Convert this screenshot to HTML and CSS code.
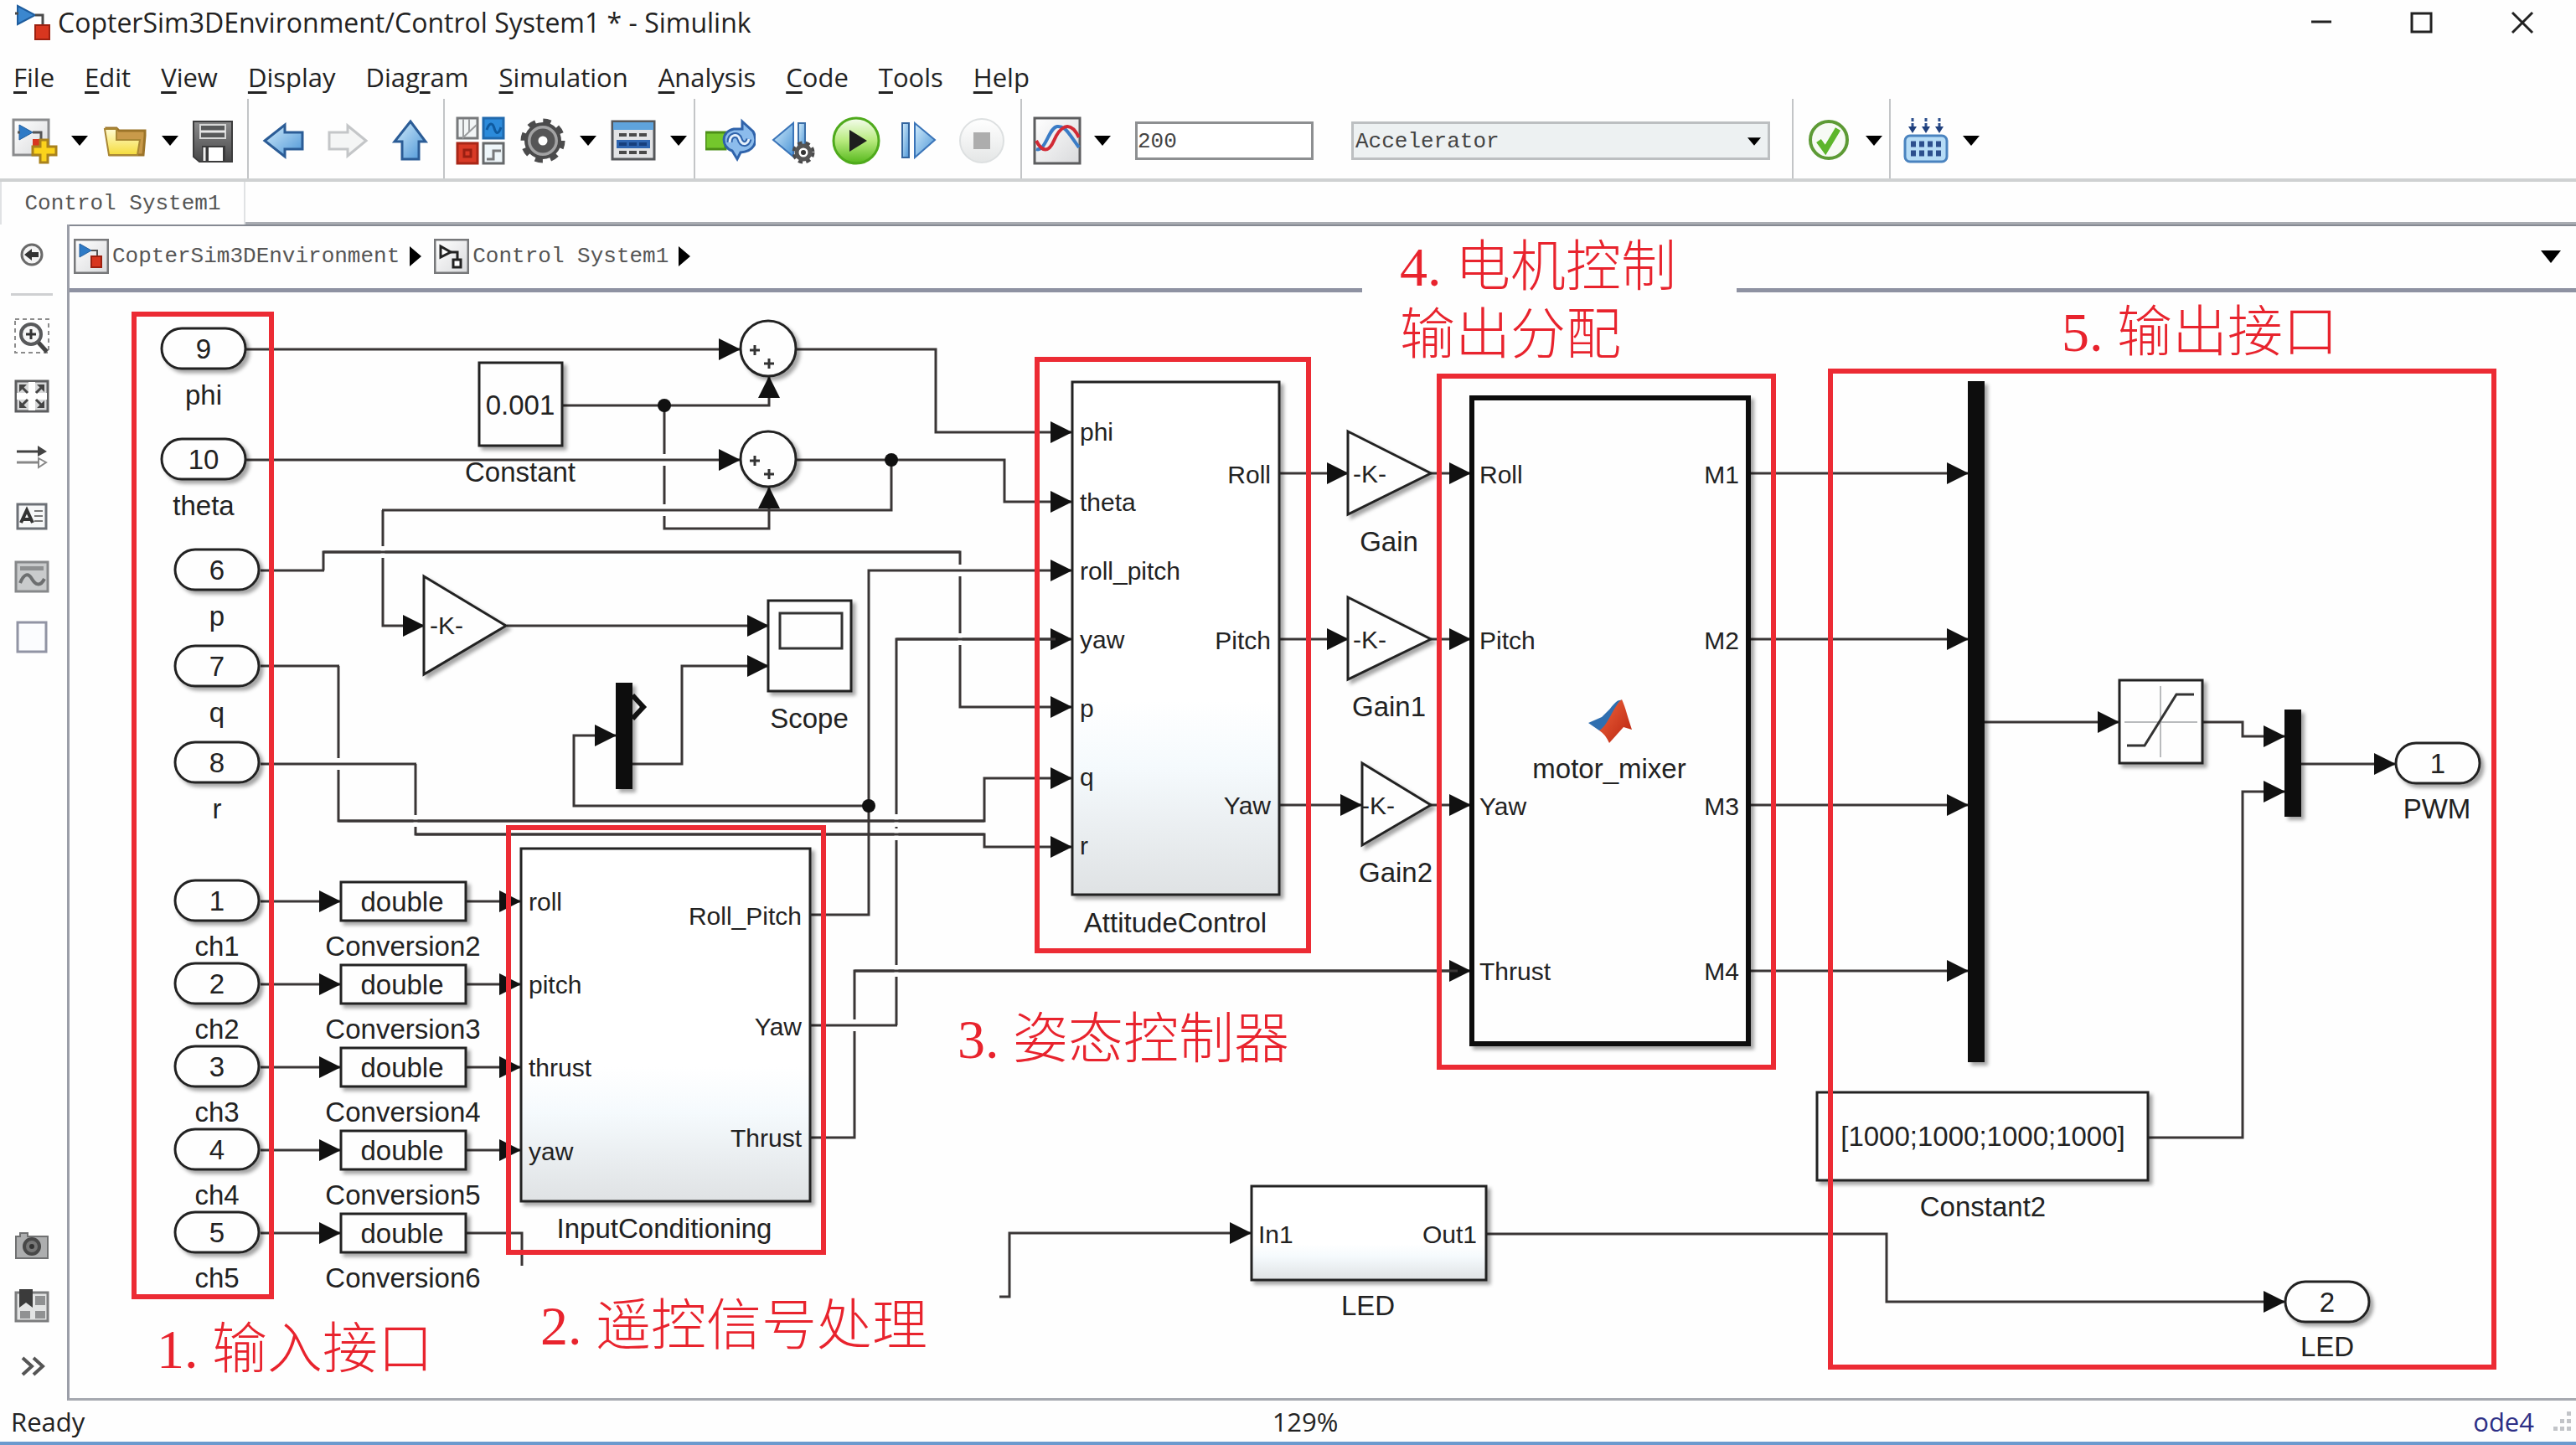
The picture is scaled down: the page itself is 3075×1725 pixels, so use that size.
FILE: index.html
```html
<!DOCTYPE html>
<html lang="zh-CN">
<head>
<meta charset="utf-8">
<title>CopterSim3DEnvironment/Control System1 * - Simulink</title>
<link rel="stylesheet" href="styles.css">
</head>
<body>
<svg class="defs" width="0" height="0" aria-hidden="true">
  <defs>
    <linearGradient id="gBlue" x1="0" y1="0" x2="1" y2="1"><stop offset="0" stop-color="#d3ecfb"/><stop offset="1" stop-color="#4a94d6"/></linearGradient>
    <linearGradient id="gPage" x1="0" y1="0" x2="1" y2="1"><stop offset="0" stop-color="#ffffff"/><stop offset="1" stop-color="#d9dadc"/></linearGradient>
    <linearGradient id="gGold" x1="0" y1="0" x2="0" y2="1"><stop offset="0" stop-color="#fffbd0"/><stop offset="1" stop-color="#f5dc3c"/></linearGradient>
    <linearGradient id="gGrey" x1="0" y1="0" x2="0" y2="1"><stop offset="0" stop-color="#8b8b8c"/><stop offset="1" stop-color="#474748"/></linearGradient>
    <linearGradient id="gGreen" x1="0" y1="0" x2="0" y2="1"><stop offset="0" stop-color="#f6fdf0"/><stop offset="0.5" stop-color="#b7ea7d"/><stop offset="1" stop-color="#56b81c"/></linearGradient>
    <linearGradient id="gStop" x1="0" y1="0" x2="0" y2="1"><stop offset="0" stop-color="#ffffff"/><stop offset="1" stop-color="#e4e6e6"/></linearGradient>
    <linearGradient id="gSub" x1="0" y1="0" x2="0" y2="1"><stop offset="0" stop-color="#ffffff"/><stop offset="0.62" stop-color="#ffffff"/><stop offset="0.75" stop-color="#f5fafd"/><stop offset="1" stop-color="#dfe2e4"/></linearGradient>
    <linearGradient id="gRed" x1="0" y1="0" x2="1" y2="1"><stop offset="0" stop-color="#f0643c"/><stop offset="1" stop-color="#b8230f"/></linearGradient>
    <symbol id="model" viewBox="0 0 42 42">
      <rect x="1" y="1" width="40" height="40" fill="url(#gPage)" stroke="#77787a" stroke-width="3"/>
      <path d="M7 6 L21 14 L7 22Z" fill="#2e7ac6" stroke="#2560a0"/>
      <path d="M21 14 H28 V21" fill="none" stroke="#555" stroke-width="2"/>
      <rect x="21" y="21" width="12" height="13" fill="#d8361f" stroke="#9c2010" stroke-width="2"/>
    </symbol>
  </defs>
</svg>

<header class="titlebar">
  <svg class="app-icon" width="44" height="44" viewBox="0 0 44 44" aria-hidden="true">
    <path d="M3 2 L24 13 L3 24Z" fill="#3b87cf" stroke="#1f5d9e" stroke-width="2"/>
    <path d="M0 11 H4 M24 13 H33 V24" fill="none" stroke="#4a4a4a" stroke-width="3"/>
    <rect x="24" y="25" width="17" height="17" fill="#d8361f" stroke="#9c2010" stroke-width="2"/>
  </svg>
  <h1>CopterSim3DEnvironment/Control System1 * - Simulink</h1>
  <div class="window-buttons">
    <button type="button" aria-label="Minimize"><svg width="30" height="30" viewBox="0 0 30 30"><path d="M3 14 H27" stroke="#222" stroke-width="3"/></svg></button>
    <button type="button" aria-label="Maximize"><svg width="30" height="30" viewBox="0 0 30 30"><rect x="3" y="4" width="23" height="22" fill="none" stroke="#222" stroke-width="3"/></svg></button>
    <button type="button" aria-label="Close"><svg width="30" height="30" viewBox="0 0 30 30"><path d="M3 3 L27 27 M27 3 L3 27" stroke="#222" stroke-width="3"/></svg></button>
  </div>
</header>

<nav class="menubar">
  <button type="button"><u>F</u>ile</button>
  <button type="button"><u>E</u>dit</button>
  <button type="button"><u>V</u>iew</button>
  <button type="button"><u>D</u>isplay</button>
  <button type="button">Diag<u>r</u>am</button>
  <button type="button"><u>S</u>imulation</button>
  <button type="button"><u>A</u>nalysis</button>
  <button type="button"><u>C</u>ode</button>
  <button type="button"><u>T</u>ools</button>
  <button type="button"><u>H</u>elp</button>
</nav>

<div class="toolbar">
  <div class="group">
    <button type="button" class="tool" aria-label="New model"><svg viewBox="0 0 60 60">
      <rect x="5" y="5" width="42" height="42" fill="url(#gPage)" stroke="#8a8b8d" stroke-width="3"/>
      <path d="M12 11 L28 20 L12 29Z" fill="#2e7ac6" stroke="#1f5d9e"/><path d="M10 20 H13 M28 20 H38 V28" fill="none" stroke="#555" stroke-width="3"/>
      <rect x="28" y="28" width="12" height="9" fill="#d8361f"/>
      <path d="M37 29 H46 V37 H56 V47 H46 V56 H37 V47 H28 V37 H37Z" fill="#fbd31c" stroke="#a9821c" stroke-width="3"/></svg></button>
    <button type="button" class="drop" aria-label="New options"><svg viewBox="0 0 20 12"><path d="M0 0 H20 L10 12Z"/></svg></button>
    <button type="button" class="tool" aria-label="Open"><svg viewBox="0 0 60 60">
      <path d="M8 15 H20 L23 18 H54 V24 L52 47 H12Z" fill="#c99a4a" stroke="#9c7429" stroke-width="3"/>
      <path d="M6 16 H20 V29 H48 L45 47 H11Z" fill="url(#gGold)" stroke="#a98734" stroke-width="2"/></svg></button>
    <button type="button" class="drop" aria-label="Open recent"><svg viewBox="0 0 20 12"><path d="M0 0 H20 L10 12Z"/></svg></button>
    <button type="button" class="tool" aria-label="Save"><svg viewBox="0 0 60 60">
      <path d="M4 7 H50 V55 H11 L4 49Z" fill="url(#gGrey)" stroke="#3c3c3d" stroke-width="2"/>
      <rect x="12" y="11" width="30" height="16" fill="#58595a" stroke="#d8d8d8" stroke-width="2"/><path d="M12 19 H42" stroke="#e8e8e8" stroke-width="3"/>
      <rect x="14" y="36" width="28" height="19" fill="#3a3a3b"/><rect x="22" y="38" width="17" height="16" fill="#fff"/><path d="M17 38 V54" stroke="#eee" stroke-width="3"/></svg></button>
  </div>
  <div class="group">
    <button type="button" class="tool" aria-label="Back"><svg viewBox="0 0 60 60"><path d="M7 30 L31 11 V20 H52 V40 H31 V49Z" fill="url(#gBlue)" stroke="#2b5c96" stroke-width="3"/></svg></button>
    <button type="button" class="tool" aria-label="Forward" disabled><svg viewBox="0 0 60 60"><path d="M53 30 L31 12 V20 H9 V40 H31 V48Z" fill="#f4f5f5" stroke="#c4c6c8" stroke-width="3"/></svg></button>
    <button type="button" class="tool" aria-label="Up to parent"><svg viewBox="0 0 60 60"><path d="M31 7 L49 31 H41 V52 H21 V31 H12Z" fill="url(#gBlue)" stroke="#2b5c96" stroke-width="3"/></svg></button>
  </div>
  <div class="group">
    <button type="button" class="tool" aria-label="Library browser"><svg viewBox="0 0 60 60">
      <rect x="3" y="3" width="24" height="24" fill="#f2f5f6" stroke="#77797b" stroke-width="3"/><path d="M10 4 V26 L26 11 M17 4 V20" fill="none" stroke="#9a9c9e" stroke-width="2"/>
      <rect x="34" y="3" width="24" height="24" fill="#2c8bdb" stroke="#2069ad" stroke-width="3"/><path d="M38 17 C41 8 45 8 47 15 S52 23 55 14" fill="none" stroke="#0f5a9f" stroke-width="3"/>
      <rect x="3" y="33" width="24" height="24" fill="#d93a26" stroke="#a82617" stroke-width="3"/><rect x="11" y="41" width="8" height="8" fill="none" stroke="#9a1f12" stroke-width="3"/>
      <rect x="34" y="33" width="24" height="24" fill="#eef6fa" stroke="#66696b" stroke-width="3"/><path d="M38 52 H46 V42 H55" fill="none" stroke="#77797b" stroke-width="3"/></svg></button>
    <button type="button" class="tool" aria-label="Model configuration"><svg viewBox="0 0 60 60">
      <circle cx="30" cy="30" r="23" fill="none" stroke="#4b4b4c" stroke-width="7" stroke-dasharray="9 9"/>
      <circle cx="30" cy="30" r="20" fill="#a3a3a4" stroke="#4b4b4c" stroke-width="4"/>
      <circle cx="30" cy="30" r="10" fill="#fff" stroke="#555556" stroke-width="9"/></svg></button>
    <button type="button" class="drop" aria-label="Configuration options"><svg viewBox="0 0 20 12"><path d="M0 0 H20 L10 12Z"/></svg></button>
    <button type="button" class="tool" aria-label="Model explorer"><svg viewBox="0 0 60 60">
      <rect x="5" y="7" width="50" height="45" fill="#e2e3e5" stroke="#55575a" stroke-width="3"/><rect x="6" y="8" width="48" height="9" fill="#5fa3dc"/>
      <rect x="10" y="29" width="40" height="10" fill="#2f65b0"/>
      <path d="M13 23 H47 M13 44 H47" stroke="#4a4a4a" stroke-width="4" stroke-dasharray="9 3"/><path d="M13 34 H47" stroke="#173f7d" stroke-width="4" stroke-dasharray="9 3"/></svg></button>
    <button type="button" class="drop" aria-label="Explorer options"><svg viewBox="0 0 20 12"><path d="M0 0 H20 L10 12Z"/></svg></button>
  </div>
  <div class="group">
    <button type="button" class="tool" aria-label="Update diagram"><svg viewBox="0 0 60 60">
      <rect x="0" y="20" width="24" height="20" fill="#74c72c" stroke="#4c8f17" stroke-width="3"/>
      <path d="M44 7 L57 19 C64 32 57 43 42 44 L38 52 L32 42 C19 38 18 19 34 16 L44 16Z" fill="#8cbcec" stroke="#2f63ab" stroke-width="3"/>
      <path d="M29 32 C29 22 39 21 41 28 S50 36 52 28" fill="none" stroke="#2f63ab" stroke-width="7"/><path d="M29 32 C29 22 39 21 41 28 S50 36 52 28" fill="none" stroke="#e4f0fc" stroke-width="3"/></svg></button>
    <button type="button" class="tool" aria-label="Step back"><svg viewBox="0 0 60 60">
      <path d="M6 29 L30 9 V49Z" fill="url(#gBlue)" stroke="#3a74b8" stroke-width="2"/><rect x="36" y="9" width="8" height="34" fill="url(#gBlue)" stroke="#3a6ea8" stroke-width="2"/>
      <circle cx="42" cy="44" r="11" fill="none" stroke="#4b4b4c" stroke-width="5" stroke-dasharray="5 4"/><circle cx="42" cy="44" r="8" fill="#fff" stroke="#555" stroke-width="5"/><circle cx="42" cy="44" r="3" fill="#333"/></svg></button>
    <button type="button" class="tool" aria-label="Run"><svg viewBox="0 0 60 60"><circle cx="30" cy="30" r="27" fill="url(#gGreen)" stroke="#4faa1c" stroke-width="3"/><path d="M22 17 L43 30 L22 43Z" fill="#1e1e1e"/></svg></button>
    <button type="button" class="tool" aria-label="Step forward"><svg viewBox="0 0 60 60"><rect x="10" y="9" width="8" height="41" fill="url(#gBlue)" stroke="#33659f" stroke-width="2"/><path d="M25 9 L49 29 L25 50Z" fill="url(#gBlue)" stroke="#3a74b8" stroke-width="2"/></svg></button>
    <button type="button" class="tool" aria-label="Stop" disabled><svg viewBox="0 0 60 60"><circle cx="30" cy="30" r="26" fill="url(#gStop)" stroke="#dde0e1" stroke-width="2"/><rect x="20" y="20" width="20" height="20" fill="#adadad"/></svg></button>
  </div>
  <div class="group">
    <button type="button" class="tool" aria-label="Data inspector"><svg viewBox="0 0 60 60">
      <rect x="3" y="3" width="54" height="54" fill="url(#gPage)" stroke="#5c5d5f" stroke-width="3"/>
      <path d="M5 40 C16 44 20 14 30 13 S44 22 56 38" fill="none" stroke="#3a7cc6" stroke-width="4"/>
      <path d="M5 30 C12 44 20 44 26 30 S44 2 56 26" fill="none" stroke="#d12a35" stroke-width="4"/></svg></button>
    <button type="button" class="drop" aria-label="Inspector options"><svg viewBox="0 0 20 12"><path d="M0 0 H20 L10 12Z"/></svg></button>
    <input class="stop-time" type="text" value="200" aria-label="Stop time">
    <div class="mode">
      <select aria-label="Simulation mode"><option>Accelerator</option></select>
      <svg viewBox="0 0 20 12" aria-hidden="true"><path d="M0 0 H20 L10 12Z"/></svg>
    </div>
  </div>
  <div class="group">
    <button type="button" class="tool" aria-label="Model advisor"><svg viewBox="0 0 60 60"><circle cx="30" cy="29" r="22" fill="#f7faf4" stroke="#5d9a35" stroke-width="4"/><path d="M18 30 L26 41 L41 16" fill="none" stroke="#5db52b" stroke-width="7"/></svg></button>
    <button type="button" class="drop" aria-label="Advisor options"><svg viewBox="0 0 20 12"><path d="M0 0 H20 L10 12Z"/></svg></button>
  </div>
  <div class="group">
    <button type="button" class="tool" aria-label="Build"><svg viewBox="0 0 60 60">
      <path d="M14 3 V14 M30 3 V14 M46 3 V14" stroke="#2c4f8d" stroke-width="3" stroke-dasharray="4 2"/><path d="M9 13 H19 L14 21Z M25 13 H35 L30 21Z M41 13 H51 L46 21Z" fill="#1f3f7c"/>
      <rect x="5" y="24" width="50" height="31" rx="6" fill="#b6dcf6" stroke="#4a83bf" stroke-width="3"/>
      <path d="M12 34 H49 M12 45 H49" stroke="#2c4f8d" stroke-width="7" stroke-dasharray="6 4"/></svg></button>
    <button type="button" class="drop" aria-label="Build options"><svg viewBox="0 0 20 12"><path d="M0 0 H20 L10 12Z"/></svg></button>
  </div>
</div>

<div class="tabs">
  <button type="button" class="tab">Control System1</button>
  <div class="tab-rest"></div>
</div>

<main class="workspace">
  <aside class="palette">
    <div class="palette-part">
      <button type="button" aria-label="Hide browser"><svg viewBox="0 0 42 42"><circle cx="21" cy="21" r="12" fill="#f4f4f4" stroke="#6a6a6a" stroke-width="3"/><path d="M12 21 L21 14 V18 H29 V24 H21 V28Z" fill="#333"/></svg></button>
      <hr>
      <button type="button" aria-label="Zoom"><svg viewBox="0 0 42 42"><rect x="1" y="1" width="40" height="40" fill="none" stroke="#8c8c8c" stroke-width="2" stroke-dasharray="5 4"/><circle cx="20" cy="19" r="12" fill="#f6f6f6" stroke="#58595b" stroke-width="4"/><path d="M20 13 V25 M14 19 H26" stroke="#333" stroke-width="3"/><path d="M29 29 L39 40" stroke="#444" stroke-width="5"/></svg></button>
      <button type="button" aria-label="Fit to view"><svg viewBox="0 0 42 42"><rect x="2" y="3" width="38" height="36" fill="#d6d7d8" stroke="#5c5d5f" stroke-width="3"/><path d="M17 4 H25 V17 H39 V25 H25 V38 H17 V25 H3 V17 H17Z" fill="#fff"/><path d="M6 7 H15 L6 16Z M36 7 H27 L36 16Z M6 35 H15 L6 26Z M36 35 H27 L36 26Z" fill="#444"/><path d="M8 9 L16 17 M34 9 L26 17 M8 33 L16 25 M34 33 L26 25" stroke="#444" stroke-width="3"/></svg></button>
      <button type="button" aria-label="Sample time legend"><svg viewBox="0 0 42 42"><path d="M3 15 H30" stroke="#444" stroke-width="3"/><path d="M28 8 L39 15 L28 21Z" fill="#444"/><path d="M3 28 H30" stroke="#888" stroke-width="3"/><path d="M29 23 L38 28 L29 34Z" fill="#fff" stroke="#888" stroke-width="2"/></svg></button>
      <button type="button" aria-label="Annotation"><svg viewBox="0 0 42 42"><rect x="4" y="6" width="34" height="29" fill="#f6f7f8" stroke="#6c7076" stroke-width="3"/><path d="M8 28 L15 13 L22 28 M11 24 H19" fill="none" stroke="#333" stroke-width="4"/><path d="M24 14 H34 M24 20 H34 M24 26 H34" stroke="#777" stroke-width="2"/></svg></button>
      <button type="button" aria-label="Image"><svg viewBox="0 0 42 42"><rect x="2" y="3" width="38" height="35" fill="#c9cbcc" stroke="#86888a" stroke-width="3"/><rect x="7" y="8" width="28" height="5" fill="#8e9091"/><path d="M7 28 C12 16 17 16 21 23 S31 33 36 23" fill="none" stroke="#6d6f70" stroke-width="4"/></svg></button>
      <button type="button" aria-label="Area"><svg viewBox="0 0 42 42"><rect x="4" y="3" width="34" height="35" fill="#fbfcfe" stroke="#9194a4" stroke-width="3"/></svg></button>
    </div>
    <div class="palette-part">
      <button type="button" aria-label="Screenshot"><svg viewBox="0 0 42 42"><path d="M2 10 H7 V6 H16 V10 H40 V36 H2Z" fill="#adaeaf" stroke="#707172" stroke-width="2"/><circle cx="21" cy="22" r="9" fill="#777" stroke="#484848" stroke-width="4"/><circle cx="21" cy="22" r="3" fill="#333"/></svg></button>
      <button type="button" aria-label="Bookmarks"><svg viewBox="0 0 42 42"><rect x="2" y="5" width="38" height="34" fill="#e3e4e4" stroke="#7c7d7e" stroke-width="3"/><rect x="25" y="9" width="12" height="11" fill="#909192"/><rect x="7" y="27" width="12" height="9" fill="#909192"/><rect x="25" y="27" width="12" height="9" fill="#909192"/><path d="M6 1 H22 V23 L14 17 L6 23Z" fill="#3b3b3b"/></svg></button>
      <button type="button" aria-label="More"><svg viewBox="0 0 42 42"><path d="M10 11 L21 21 L10 31 M23 11 L34 21 L23 31" fill="none" stroke="#555" stroke-width="4"/></svg></button>
    </div>
  </aside>

  <section class="editor">
    <nav class="crumbs">
      <svg width="42" height="42" aria-hidden="true"><use href="#model"/></svg>
      <a href="#model-root">CopterSim3DEnvironment</a>
      <svg class="sep" width="14" height="24" viewBox="0 0 14 24" aria-hidden="true"><path d="M0 0 L14 12 L0 24Z"/></svg>
      <svg width="42" height="42" viewBox="0 0 42 42" aria-hidden="true"><rect x="1" y="1" width="40" height="40" fill="url(#gPage)" stroke="#77787a" stroke-width="3"/><path d="M8 9 L20 16 L8 22Z" fill="#fff" stroke="#222" stroke-width="3"/><path d="M20 16 H28 V24" fill="none" stroke="#222" stroke-width="3"/><rect x="23" y="25" width="9" height="9" fill="#fff" stroke="#222" stroke-width="3"/></svg>
      <a href="#control-system">Control System1</a>
      <svg class="sep" width="14" height="24" viewBox="0 0 14 24" aria-hidden="true"><path d="M0 0 L14 12 L0 24Z"/></svg>
      <button type="button" class="crumb-menu" aria-label="Navigation history"><svg width="24" height="15" viewBox="0 0 24 15"><path d="M0 0 H24 L12 15Z"/></svg></button>
    </nav>

    <svg class="diagram" viewBox="83 349 2992 1320" role="img" aria-label="Control System1 block diagram">
      <defs>
        <marker id="arrow" markerUnits="userSpaceOnUse" markerWidth="26" markerHeight="28" refX="25" refY="14" orient="auto"><path d="M0 1 L26 14 L0 27Z" fill="#111"/></marker>
        <filter id="shadow" x="-20%" y="-20%" width="150%" height="150%"><feDropShadow dx="4" dy="4" stdDeviation="2" flood-color="#000" flood-opacity="0.35"/></filter>
      </defs>

      <rect class="mask" x="1626" y="338" width="447" height="16"/>

      <!-- signal lines: those that pass under another are drawn first, with a break at the crossing -->
      <g class="wire">
        <path d="M404 795 V980 H1175 V929 H1279" marker-end="url(#arrow)"/>
        <path d="M457 609 V747 H506" marker-end="url(#arrow)"/>
        <path d="M793 484 V631 H918 V582" marker-end="url(#arrow)"/>
        <path d="M1070 1224 V763 H1279" marker-end="url(#arrow)"/>
        <path d="M968 1358 H1020 V1159 H1755" marker-end="url(#arrow)"/>
        <path d="M386 681 V659 H1146 V844 H1279" marker-end="url(#arrow)"/>
        <path d="M496 912 V996 H1175 V1011 H1279" marker-end="url(#arrow)"/>
      </g>
      <path class="gap" d="M404 905 V919 M457 652 V666 M793 542 V556 M793 602 V616 M1070 972 V987 M1070 989 V1003 M1070 1152 V1166 M1020 1217 V1231 M1146 674 V688 M1146 756 V770 M496 973 V987"/>
      <g class="wire">
        <path d="M294 417 H883" marker-end="url(#arrow)"/>
        <path d="M294 549 H883" marker-end="url(#arrow)"/>
        <path d="M671 484 H918 V450" marker-end="url(#arrow)"/>
        <path d="M951 417 H1117 V516 H1279" marker-end="url(#arrow)"/>
        <path d="M951 549 H1199 V599 H1279" marker-end="url(#arrow)"/>
        <path d="M1064 549 V609 H456"/>
        <path d="M311 681 H387"/>
        <path d="M386 659 H1146"/>
        <path d="M311 795 H405"/>
        <path d="M311 912 H497"/>
        <path d="M404 980 H1175"/>
        <path d="M496 996 H1175"/>
        <path d="M1020 1159 H1740"/>
        <path d="M605 747 H917" marker-end="url(#arrow)"/>
        <path d="M755 912 H814 V795 H917" marker-end="url(#arrow)"/>
        <path d="M1037 962 H685 V878 H735" marker-end="url(#arrow)"/>
        <path d="M968 1092 H1037 V681 H1279" marker-end="url(#arrow)"/>
        <path d="M1070 763 H1260"/>
        <path d="M968 1224 H1071"/>
        <path d="M311 1076 H406" marker-end="url(#arrow)"/><path d="M557 1076 H621" marker-end="url(#arrow)"/>
        <path d="M311 1175 H406" marker-end="url(#arrow)"/><path d="M557 1175 H621" marker-end="url(#arrow)"/>
        <path d="M311 1274 H406" marker-end="url(#arrow)"/><path d="M557 1274 H621" marker-end="url(#arrow)"/>
        <path d="M311 1373 H406" marker-end="url(#arrow)"/><path d="M557 1373 H621" marker-end="url(#arrow)"/>
        <path d="M311 1472 H406" marker-end="url(#arrow)"/><path d="M557 1472 H623 V1511"/>
        <path d="M1528 565 H1609" marker-end="url(#arrow)"/><path d="M1708 565 H1755" marker-end="url(#arrow)"/>
        <path d="M1528 763 H1609" marker-end="url(#arrow)"/><path d="M1708 763 H1755" marker-end="url(#arrow)"/>
        <path d="M1528 961 H1625" marker-end="url(#arrow)"/><path d="M1708 961 H1755" marker-end="url(#arrow)"/>
        <path d="M2090 565 H2349" marker-end="url(#arrow)"/>
        <path d="M2090 763 H2349" marker-end="url(#arrow)"/>
        <path d="M2090 961 H2349" marker-end="url(#arrow)"/>
        <path d="M2090 1159 H2349" marker-end="url(#arrow)"/>
        <path d="M2369 862 H2529" marker-end="url(#arrow)"/>
        <path d="M2629 862 H2677 V879 H2727" marker-end="url(#arrow)"/>
        <path d="M2565 1358 H2677 V945 H2727" marker-end="url(#arrow)"/>
        <path d="M2747 912 H2859" marker-end="url(#arrow)"/>
        <path d="M1193 1548 H1205 V1472 H1493" marker-end="url(#arrow)"/>
        <path d="M1775 1473 H2252 V1554 H2727" marker-end="url(#arrow)"/>
      </g>
      <g class="solid">
        <circle cx="793" cy="484" r="8"/><circle cx="1064" cy="549" r="8"/><circle cx="1037" cy="962" r="8"/>
      </g>

      <!-- blocks -->
      <g class="block">
        <rect x="193" y="392" width="100" height="48" rx="24"/>
        <rect x="193" y="524" width="100" height="48" rx="24"/>
        <rect x="209" y="656" width="100" height="48" rx="24"/>
        <rect x="209" y="771" width="100" height="48" rx="24"/>
        <rect x="209" y="886" width="100" height="48" rx="24"/>
        <rect x="209" y="1051" width="100" height="48" rx="24"/>
        <rect x="209" y="1150" width="100" height="48" rx="24"/>
        <rect x="209" y="1249" width="100" height="48" rx="24"/>
        <rect x="209" y="1348" width="100" height="48" rx="24"/>
        <rect x="209" y="1447" width="100" height="48" rx="24"/>
        <rect x="2860" y="887" width="100" height="48" rx="24"/>
        <rect x="2728" y="1530" width="100" height="48" rx="24"/>
        <rect x="407" y="1053" width="149" height="46"/>
        <rect x="407" y="1152" width="149" height="46"/>
        <rect x="407" y="1251" width="149" height="46"/>
        <rect x="407" y="1350" width="149" height="46"/>
        <rect x="407" y="1449" width="149" height="46"/>
        <rect x="572" y="433" width="99" height="99"/>
        <circle cx="917" cy="416" r="33"/>
        <circle cx="917" cy="548" r="33"/>
        <path d="M506 688 L604 747 L506 805Z"/>
        <path d="M1609 515 L1708 565 L1609 614Z"/>
        <path d="M1609 713 L1708 763 L1609 811Z"/>
        <path d="M1626 911 L1708 961 L1626 1009Z"/>
        <rect x="917" y="717" width="99" height="108"/>
        <rect x="2530" y="812" width="99" height="99"/>
        <rect x="2169" y="1304" width="395" height="105"/>
      </g>
      <g class="block sub">
        <rect x="622" y="1013" width="345" height="421"/>
        <rect x="1280" y="456" width="247" height="612"/>
        <rect x="1494" y="1416" width="280" height="112"/>
      </g>
      <rect class="block mixer" x="1757" y="475" width="330" height="771"/>
      <g class="solid" filter="url(#shadow)">
        <rect x="735" y="815" width="20" height="127"/>
        <rect x="2349" y="455" width="20" height="813"/>
        <rect x="2727" y="847" width="20" height="128"/>
      </g>
      <path class="chevron" d="M755 830 L768 844 L755 858"/>
      <rect class="thin" x="931" y="732" width="74" height="42"/>
      <path class="cross" d="M2579 819 V904 M2536 862 H2623"/>
      <path class="thin" d="M2539 890 H2560 L2598 829 H2619"/>
      <path class="thin" d="M895 418 H907 M901 412 V424 M912 434 H924 M918 428 V440 M895 550 H907 M901 544 V556 M912 566 H924 M918 560 V572"/>

      <!-- MATLAB function mark -->
      <path d="M1896 863 L1912 856 L1922 846 C1928 838 1932 835 1936 836 L1918 872 L1909 872Z" fill="#2f6fb0"/>
      <path d="M1936 835 C1940 843 1944 860 1948 871 L1938 868 L1921 887 C1918 880 1914 875 1909 872 C1920 866 1926 842 1936 835Z" fill="url(#gRed)"/>

      <!-- port numbers and block values -->
      <g class="label mid">
        <text x="243" y="428">9</text><text x="243" y="560">10</text><text x="259" y="692">6</text><text x="259" y="807">7</text><text x="259" y="922">8</text>
        <text x="259" y="1087">1</text><text x="259" y="1186">2</text><text x="259" y="1285">3</text><text x="259" y="1384">4</text><text x="259" y="1483">5</text>
        <text x="2910" y="923">1</text><text x="2778" y="1566">2</text>
        <text x="480" y="1088">double</text><text x="480" y="1187">double</text><text x="480" y="1286">double</text><text x="480" y="1385">double</text><text x="480" y="1484">double</text>
        <text x="621" y="495">0.001</text><text x="2367" y="1368">[1000;1000;1000;1000]</text>
        <text x="1921" y="929">motor_mixer</text>
      </g>
      <!-- block names -->
      <g class="label mid">
        <text x="243" y="483">phi</text><text x="243" y="615">theta</text><text x="259" y="747">p</text><text x="259" y="862">q</text><text x="259" y="977">r</text>
        <text x="259" y="1141">ch1</text><text x="259" y="1240">ch2</text><text x="259" y="1339">ch3</text><text x="259" y="1438">ch4</text><text x="259" y="1537">ch5</text>
        <text x="481" y="1141">Conversion2</text><text x="481" y="1240">Conversion3</text><text x="481" y="1339">Conversion4</text><text x="481" y="1438">Conversion5</text><text x="481" y="1537">Conversion6</text>
        <text x="621" y="575">Constant</text><text x="966" y="869">Scope</text><text x="793" y="1478">InputConditioning</text><text x="1403" y="1113">AttitudeControl</text>
        <text x="1658" y="658">Gain</text><text x="1658" y="855">Gain1</text><text x="1666" y="1053">Gain2</text>
        <text x="2367" y="1452">Constant2</text><text x="2909" y="977">PWM</text><text x="2778" y="1619">LED</text><text x="1633" y="1570">LED</text>
      </g>
      <g class="port mid">
        <text x="533" y="757">-K-</text><text x="1635" y="576">-K-</text><text x="1635" y="774">-K-</text><text x="1645" y="972">-K-</text>
      </g>
      <g class="port">
        <text x="631" y="1087">roll</text><text x="631" y="1186">pitch</text><text x="631" y="1285">thrust</text><text x="631" y="1385">yaw</text>
        <text x="1289" y="526">phi</text><text x="1289" y="610">theta</text><text x="1289" y="692">roll_pitch</text><text x="1289" y="774">yaw</text><text x="1289" y="856">p</text><text x="1289" y="938">q</text><text x="1289" y="1020">r</text>
        <text x="1766" y="577">Roll</text><text x="1766" y="775">Pitch</text><text x="1766" y="973">Yaw</text><text x="1766" y="1170">Thrust</text><text x="1502" y="1484">In1</text>
      </g>
      <g class="port end">
        <text x="957" y="1104">Roll_Pitch</text><text x="957" y="1236">Yaw</text><text x="957" y="1369">Thrust</text>
        <text x="1517" y="577">Roll</text><text x="1517" y="775">Pitch</text><text x="1517" y="972">Yaw</text>
        <text x="2076" y="577">M1</text><text x="2076" y="775">M2</text><text x="2076" y="973">M3</text><text x="2076" y="1170">M4</text><text x="1763" y="1484">Out1</text>
      </g>

      <!-- numbered areas -->
      <g class="area">
        <rect x="160" y="375" width="164" height="1173"/>
        <rect x="607" y="988" width="376" height="507"/>
        <rect x="1238" y="429" width="324" height="706"/>
        <rect x="1718" y="449" width="399" height="825"/>
        <rect x="2185" y="443" width="792" height="1189"/>
      </g>
      <g class="note">
        <text x="187" y="1633">1. 输入接口</text>
        <text x="645" y="1605">2. 遥控信号处理</text>
        <text x="1143" y="1263">3. 姿态控制器</text>
        <text x="1671" y="341">4. 电机控制</text>
        <text x="1671" y="422">输出分配</text>
        <text x="2461" y="419">5. 输出接口</text>
      </g>
    </svg>
  </section>
</main>

<footer class="statusbar">
  <span class="state">Ready</span>
  <span>129%</span>
  <a class="solver" href="#solver">ode4</a>
  <svg width="24" height="24" viewBox="0 0 24 24" aria-hidden="true"><path d="M17 0 H22 V5 H17Z M17 9 H22 V14 H17Z M9 9 H14 V14 H9Z M17 18 H22 V23 H17Z M9 18 H14 V23 H9Z M1 18 H6 V23 H1Z" fill="#c2c4c8"/></svg>
</footer>
</body>
</html>
```
FILE: styles.css
```css
* { box-sizing: border-box; }

body {
  margin: 0;
  min-height: 100vh;
  display: flex;
  flex-direction: column;
  background: #fefefe;
  color: #222;
  font: 32px/44px "Open Sans", "Noto Sans", sans-serif;
}

button {
  margin: 0;
  padding: 0;
  border: 0;
  background: none;
  color: inherit;
  font: inherit;
}

a { color: inherit; text-decoration: none; }

.defs { position: absolute; }

.titlebar {
  display: flex;
  align-items: center;
  height: 62px;
  padding: 0 49px 8px 18px;
  gap: 7px;
}
.titlebar h1 { flex: 1; margin: 0; font-size: 32px; font-weight: 400; }
.window-buttons { display: flex; gap: 90px; }
.window-buttons button, .window-buttons svg { display: block; }

.menubar {
  display: flex;
  gap: 36px;
  height: 56px;
  align-items: center;
  padding: 4px 16px 0;
  font-size: 31px;
  font-weight: 500;
}
.menubar u { text-decoration-thickness: 3px; text-underline-offset: 5px; }

.toolbar {
  display: flex;
  height: 99px;
  border-bottom: 4px solid #cfd1d2;
}
.group { display: flex; align-items: center; padding-left: 5px; }
.group + .group { padding-left: 6px; border-left: 2px solid #c3c5c7; }
.group:nth-child(2) { margin-left: 2px; padding-right: 4px; }
.group:nth-child(4) { padding-right: 10px; }
.tool { width: 72px; padding-top: 4px; display: flex; justify-content: center; }
.tool svg { width: 60px; height: 60px; }
.tool + .tool { margin-left: 3px; }
.drop { width: 36px; padding-top: 4px; display: flex; justify-content: center; }
.drop svg { width: 20px; height: 12px; }

.stop-time, .mode select {
  height: 46px;
  padding: 2px 0 0;
  border: 3px solid #8d8f91;
  border-radius: 0;
  background: #fff;
  color: #444;
  font: 26px/36px "Liberation Mono", monospace;
}
.stop-time { width: 213px; margin: 4px 0 0 21px; }
.mode { position: relative; margin: 4px 26px 0 45px; }
.mode select {
  display: block;
  width: 500px;
  padding-left: 2px;
  appearance: none;
  border-color: #bcbfc1;
  background: #edf1f2;
}
.mode svg { position: absolute; right: 11px; top: 18px; width: 16px; height: 12px; }

.tabs { display: flex; height: 51px; }
.tab {
  width: 293px;
  border: solid #e0e2e4;
  border-width: 0 2px;
  color: #555;
  font: 26px/44px "Liberation Mono", monospace;
}
.tab-rest { flex: 1; border-bottom: 3px solid #a9acb2; }

.workspace { flex: 1; display: grid; grid-template-columns: 80px 1fr; }

.palette { display: flex; flex-direction: column; justify-content: space-between; padding-bottom: 5px; }
.palette button { display: flex; width: 76px; height: 72px; align-items: center; justify-content: center; }
.palette svg { width: 42px; height: 42px; }
.palette hr { width: 50px; height: 3px; margin: 10px 12px 12px 13px; border: 0; background: #cfd0d2; }

.editor {
  min-width: 0;
  display: flex;
  flex-direction: column;
  border-left: 3px solid #9b9ea8;
  border-bottom: 3px solid #a6a9b0;
}
.crumbs {
  display: flex;
  align-items: center;
  gap: 4px;
  height: 81px;
  padding: 0 18px 2px 5px;
  border-top: 2px solid #868a93;
  border-bottom: 5px solid #8e92a2;
  color: #555;
  font: 26px/40px "Liberation Mono", monospace;
}
.crumbs .sep { margin: 0 11px 0 8px; }
.crumb-menu { margin-left: auto; display: flex; }

.diagram { position: relative; display: block; width: 100%; height: auto; overflow: visible; }

.mask { fill: #fefefe; }
.wire path { fill: none; stroke: #3a3636; stroke-width: 3; }
.gap { fill: none; stroke: #fefefe; stroke-width: 5; }
.solid { fill: #111; }
.block { fill: #fefefe; stroke: #242424; stroke-width: 3; filter: url(#shadow); }
.sub { fill: url(#gSub); }
.mixer { stroke: #0d0d0d; stroke-width: 6; }
.chevron { fill: none; stroke: #111; stroke-width: 6; }
.thin { fill: none; stroke: #333; stroke-width: 3; }
.cross { stroke: #b9bbbd; stroke-width: 2; }

.label, .port { fill: #222; font-family: "Liberation Sans", Arial, sans-serif; }
.label { font-size: 33px; }
.port { font-size: 30px; }
.mid { text-anchor: middle; }
.end { text-anchor: end; }

.area { fill: none; stroke: #ec2b34; stroke-width: 6; }
.note {
  fill: #e8232d;
  font: 300 66px "Liberation Serif", "Noto Sans CJK SC", serif;
}

.statusbar {
  display: grid;
  grid-template-columns: 95fr auto 90fr auto;
  align-items: center;
  column-gap: 22px;
  height: 53px;
  padding: 0 4px 0 13px;
  border-bottom: 4px solid #6c9ace;
  font-size: 31px;
  font-weight: 500;
}
.solver { color: #2d2f86; justify-self: end; }
```
